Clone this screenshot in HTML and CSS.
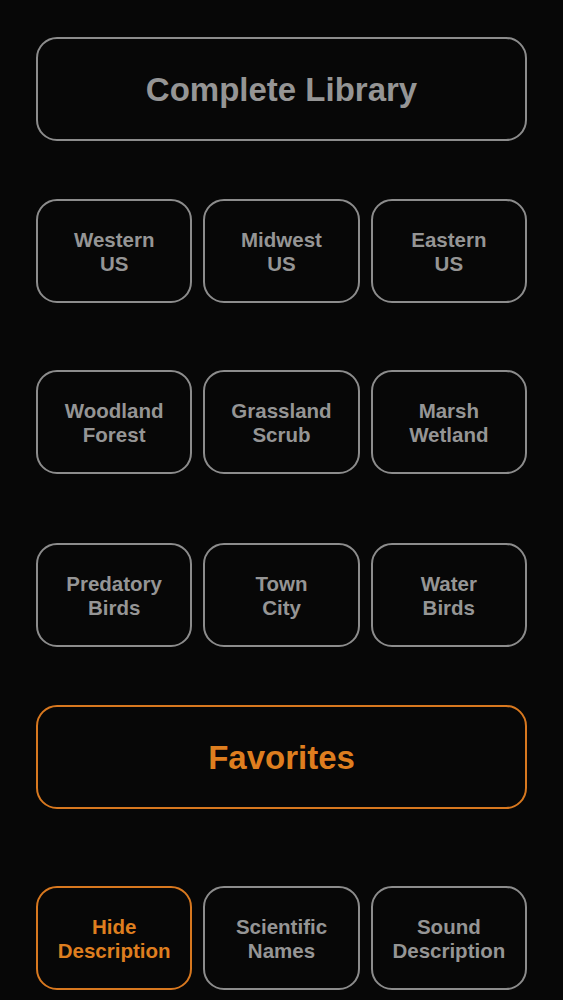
FILE: index.html
```html
<!DOCTYPE html>
<html>
<head>
<meta charset="utf-8">
<link rel="stylesheet" href="styles.css">
</head>
<body>
<main class="menu">
  <button class="btn btn-wide">Complete Library</button>
  <div class="row row-1">
    <button class="btn">Western<br>US</button>
    <button class="btn">Midwest<br>US</button>
    <button class="btn">Eastern<br>US</button>
  </div>
  <div class="row row-2">
    <button class="btn">Woodland<br>Forest</button>
    <button class="btn">Grassland<br>Scrub</button>
    <button class="btn">Marsh<br>Wetland</button>
  </div>
  <div class="row row-3">
    <button class="btn">Predatory<br>Birds</button>
    <button class="btn">Town<br>City</button>
    <button class="btn">Water<br>Birds</button>
  </div>
  <button class="btn btn-wide btn-active fav">Favorites</button>
  <div class="row row-5">
    <button class="btn btn-active">Hide<br>Description</button>
    <button class="btn">Scientific<br>Names</button>
    <button class="btn">Sound<br>Description</button>
  </div>
</main>
</body>
</html>
```
FILE: styles.css
```css
html, body {
  margin: 0;
  padding: 0;
  background: #070707;
  height: 1000px;
  overflow: hidden;
}
.menu {
  display: flex;
  flex-direction: column;
  padding: 37px 36px 0 36px;
  width: 491px;
}
.btn {
  box-sizing: border-box;
  height: 104px;
  background: #070707;
  border: 2px solid #8c8c8c;
  border-radius: 21px;
  color: #959595;
  font-family: "Liberation Sans", Arial, sans-serif;
  font-weight: bold;
  font-size: 20.5px;
  line-height: 24px;
  text-align: center;
  padding: 2px 0 0 0;
  margin: 0;
}
.btn-wide {
  width: 491px;
  font-size: 33px;
  line-height: 38px;
}
.btn-active {
  border-color: #d8781f;
  color: #de7e1f;
}
.row {
  display: grid;
  grid-template-columns: repeat(3, 1fr);
  gap: 11px;
}
.row-1 { margin-top: 58px; }
.row-2 { margin-top: 67px; }
.row-3 { margin-top: 69px; }
.fav { margin-top: 58px; }
.row-5 { margin-top: 77px; }
```
